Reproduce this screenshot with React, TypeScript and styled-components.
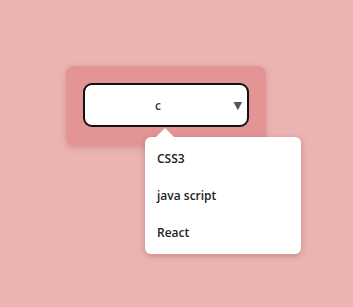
import { createGlobalStyle } from 'styled-components'
import styled from 'styled-components'

const GlobalStyle = createGlobalStyle`
	html, body {
		margin: 0;
		padding: 0;
		background: #ecb3b3;
		font-family: 'Open Sans', 'Noto Sans', sans-serif;
	}
`

const options = ['CSS3', 'java script', 'React']

export default function App() {
	return (
		<Page>
			<GlobalStyle />
			<Card>
				<SelectBox>
					<Value>c</Value>
					<Caret>▼</Caret>
				</SelectBox>
				<Menu>
					{options.map((o) => (
						<MenuItem key={o}>{o}</MenuItem>
					))}
				</Menu>
			</Card>
		</Page>
	)
}

const Page = styled.div`
	width: 353px;
	height: 307px;
	padding: 66px 0 0 66px;
	box-sizing: border-box;
`

const Card = styled.div`
	position: relative;
	width: 200px;
	height: 80px;
	box-sizing: border-box;
	padding: 17px;
	background: #e39494;
	border-radius: 8px;
	box-shadow: 0 2px 6px rgba(150, 60, 60, 0.25);
`

const SelectBox = styled.div`
	position: relative;
	display: flex;
	align-items: center;
	justify-content: center;
	width: 166px;
	height: 44px;
	box-sizing: border-box;
	padding-right: 16px;
	border: 2px solid #111;
	border-radius: 9px;
	background: #fff;
`

const Value = styled.span`
	font-size: 12px;
	font-weight: 600;
	color: #334;
`

const Caret = styled.span`
	position: absolute;
	right: 5px;
	top: 50%;
	transform: translateY(-50%);
	font-size: 11px;
	color: #555;
	font-family: 'DejaVu Sans', sans-serif;
`

const Menu = styled.ul`
	position: absolute;
	left: 79px;
	top: 71px;
	width: 156px;
	margin: 0;
	padding: 3px 0;
	list-style: none;
	background: #fff;
	border-radius: 6px;
	box-shadow: 0 2px 6px rgba(120, 40, 40, 0.3);

	&::before {
		content: '';
		position: absolute;
		left: 11px;
		top: -9px;
		border-left: 9px solid transparent;
		border-right: 9px solid transparent;
		border-bottom: 9px solid #fff;
	}
`

const MenuItem = styled.li`
	padding: 0 12px;
	height: 37px;
	line-height: 37px;
	font-size: 12px;
	font-weight: 600;
	color: #222;
`
